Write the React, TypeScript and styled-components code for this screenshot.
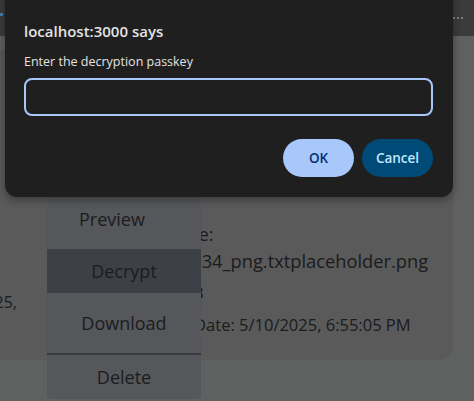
import React from "react";
import styled, { createGlobalStyle } from "styled-components";

const Global = createGlobalStyle`
  html, body { margin: 0; padding: 0; }
  body {
    background: #5f6060;
    overflow: hidden;
    font-family: "Open Sans", "Noto Sans", sans-serif;
  }
`;

const Viewport = styled.div`
  position: relative;
  width: 474px;
  height: 401px;
  overflow: hidden;
  background: #5f6060;
`;

const TopBar = styled.div`
  height: 36px;
  background: #3b3b3b;
  display: flex;
  align-items: center;
  justify-content: space-between;
  padding: 0 11px 0 0;
  box-sizing: border-box;
`;

const TabMark = styled.div`
  width: 3px;
  height: 3px;
  margin-top: -8px;
  background: #3f86c8;
  border-radius: 1px;
`;

const Dots = styled.div`
  display: flex;
  gap: 2px;
`;

const Dot = styled.span`
  width: 2px;
  height: 2px;
  background: #9a9a9a;
  border-radius: 50%;
`;

const Content = styled.div`
  position: relative;
  padding-top: 14px;
  height: 351px;
`;

const Card = styled.div`
  margin-left: -20px;
  width: 473px;
  height: 310px;
  box-sizing: border-box;
  background: #5a5a5b;
  border-radius: 0 0 14px 0;
  display: flex;
  color: #1b1b1b;
  overflow: hidden;
`;

const LeftCol = styled.div`
  width: 37px;
  flex-shrink: 0;
  overflow: hidden;
  display: flex;
  justify-content: flex-end;
  align-items: flex-start;
  padding-top: 241px;
`;

const LeftText = styled.div`
  font-size: 16px;
  line-height: 22px;
  white-space: nowrap;
  flex-shrink: 0;
`;

const RightCol = styled.div`
  margin-left: 107px;
  padding-top: 170px;
  min-width: 0;
  display: flex;
  flex-direction: column;
  align-items: flex-start;
  white-space: nowrap;
`;

const Line = styled.div<{ $size: number; $lh: number; $mt?: number; $ml?: number }>`
  font-size: ${(p) => p.$size}px;
  line-height: ${(p) => p.$lh}px;
  margin-top: ${(p) => p.$mt ?? 0}px;
  margin-left: ${(p) => p.$ml ?? 0}px;
`;

const Menu = styled.div`
  position: absolute;
  left: 47px;
  top: 153px;
  width: 154px;
  background: #55575b;
  border-radius: 0 0 4px 4px;
  display: flex;
  flex-direction: column;
  overflow: hidden;
`;

const MenuItem = styled.div<{ $tall?: boolean; $active?: boolean; $left?: boolean }>`
  height: ${(p) => (p.$tall ? 60 : 44)}px;
  display: flex;
  align-items: center;
  justify-content: ${(p) => (p.$left ? "flex-start" : "center")};
  padding-left: ${(p) => (p.$left ? 32 : 0)}px;
  background: ${(p) => (p.$active ? "#3d4047" : "transparent")};
  font-size: 18px;
  color: #1c1c1e;
`;

const Separator = styled.div`
  height: 2px;
  background: #3a3c42;
`;

const Dialog = styled.div`
  position: absolute;
  left: 5px;
  top: -20px;
  width: 448px;
  box-sizing: border-box;
  padding: 41px 20px 20px 19px;
  background: #1f1f1f;
  border-radius: 12px;
  box-shadow: 0 3px 10px rgba(0, 0, 0, 0.35);
  display: flex;
  flex-direction: column;
`;

const Title = styled.div`
  font-size: 15px;
  line-height: 20px;
  font-weight: 600;
  color: #e3e3e3;
`;

const Message = styled.div`
  margin-top: 12px;
  font-size: 12.5px;
  line-height: 18px;
  color: #e3e3e3;
`;

const Input = styled.div`
  margin-top: 7px;
  height: 38px;
  box-sizing: border-box;
  border: 2px solid #a8c7fa;
  border-radius: 8px;
  background: #1f1f1f;
`;

const Buttons = styled.div`
  margin-top: 23px;
  display: flex;
  justify-content: flex-end;
  gap: 8px;
`;

const Button = styled.div<{ $primary?: boolean }>`
  width: 71px;
  height: 38px;
  border-radius: 19px;
  display: flex;
  align-items: center;
  justify-content: center;
  font-size: 13.5px;
  font-weight: 600;
  background: ${(p) => (p.$primary ? "#a8c7fa" : "#004a77")};
  color: ${(p) => (p.$primary ? "#062e6f" : "#c2e7ff")};
`;

export default function App() {
  return (
    <>
      <Global />
      <Viewport>
        <TopBar>
          <TabMark />
          <Dots>
            <Dot />
            <Dot />
            <Dot />
          </Dots>
        </TopBar>
        <Content>
          <Card>
            <LeftCol>
              <LeftText>Uploaded Date: 5/10/2025,</LeftText>
            </LeftCol>
            <RightCol>
              <Line $size={18.3} $lh={27}>File Name:</Line>
              <Line $size={18.3} $lh={27} $ml={-71}>file_1746883505034_png.txtplaceholder.png</Line>
              <Line $size={16} $lh={22} $mt={8} $ml={-14}>Size: 1.83 KB</Line>
              <Line $size={16.5} $lh={22} $mt={10} $ml={-9}>Uploaded Date: 5/10/2025, 6:55:05 PM</Line>
            </RightCol>
          </Card>
          <Menu>
            <MenuItem $tall $left>Preview</MenuItem>
            <MenuItem $active>Decrypt</MenuItem>
            <MenuItem $tall>Download</MenuItem>
            <Separator />
            <MenuItem>Delete</MenuItem>
          </Menu>
        </Content>
        <Dialog>
          <Title>localhost:3000 says</Title>
          <Message>Enter the decryption passkey</Message>
          <Input />
          <Buttons>
            <Button $primary>OK</Button>
            <Button>Cancel</Button>
          </Buttons>
        </Dialog>
      </Viewport>
    </>
  );
}
